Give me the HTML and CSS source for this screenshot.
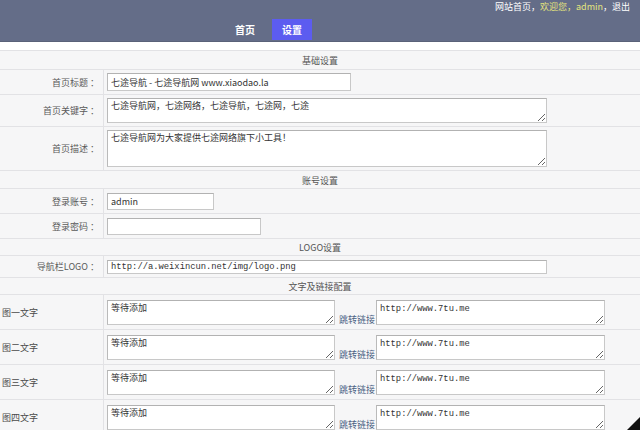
FILE: index.html
```html
<!DOCTYPE html>
<html lang="zh-CN">
<head>
<meta charset="utf-8">
<title>设置</title>
<link rel="stylesheet" href="styles.css">
</head>
<body>
<header class="top">
  <div class="userbar"><span>网站首页</span>，<span class="hl">欢迎您，admin</span>，<span>退出</span></div>
  <nav class="nav"><a class="nav-item">首页</a><a class="nav-item active">设置</a></nav>
</header>

<main class="form">
  <div class="row sec h19">基础设置</div>
  <div class="row h25">
    <div class="label">首页标题<span class="colon">：</span></div>
    <div class="field"><input class="in w244 h18" value="七途导航 - 七途导航网 www.xiaodao.la"></div>
  </div>
  <div class="row h32">
    <div class="label">首页关键字<span class="colon">：</span></div>
    <div class="field"><textarea class="ta w440 h25">七途导航网，七途网络，七途导航，七途网，七途</textarea></div>
  </div>
  <div class="row h44">
    <div class="label">首页描述<span class="colon">：</span></div>
    <div class="field"><textarea class="ta w440 h37">七途导航网为大家提供七途网络旗下小工具！</textarea></div>
  </div>

  <div class="row sec h18">账号设置</div>
  <div class="row h25">
    <div class="label">登录账号<span class="colon">：</span></div>
    <div class="field"><input class="in w107 h17" value="admin"></div>
  </div>
  <div class="row h25">
    <div class="label">登录密码<span class="colon">：</span></div>
    <div class="field"><input class="in w154 h17" type="password" value=""></div>
  </div>

  <div class="row sec h17">LOGO设置</div>
  <div class="row h22">
    <div class="label">导航栏LOGO<span class="colon">：</span></div>
    <div class="field"><input class="in mono w440 h14" value="http://a.weixincun.net/img/logo.png"></div>
  </div>

  <div class="row sec h17">文字及链接配置</div>
  <div class="row h35">
    <div class="label left">图一文字</div>
    <div class="field pair">
      <textarea class="ta w228 h25">等待添加</textarea><span class="jump">跳转链接</span><textarea class="ta mono w229 h25">http://www.7tu.me</textarea>
    </div>
  </div>
  <div class="row h35">
    <div class="label left">图二文字</div>
    <div class="field pair">
      <textarea class="ta w228 h25">等待添加</textarea><span class="jump">跳转链接</span><textarea class="ta mono w229 h25">http://www.7tu.me</textarea>
    </div>
  </div>
  <div class="row h35">
    <div class="label left">图三文字</div>
    <div class="field pair">
      <textarea class="ta w228 h25">等待添加</textarea><span class="jump">跳转链接</span><textarea class="ta mono w229 h25">http://www.7tu.me</textarea>
    </div>
  </div>
  <div class="row h35">
    <div class="label left">图四文字</div>
    <div class="field pair">
      <textarea class="ta w228 h25">等待添加</textarea><span class="jump">跳转链接</span><textarea class="ta mono w229 h25">http://www.7tu.me</textarea>
    </div>
  </div>
</main>
<div class="corner"></div>
</body>
</html>
```

FILE: styles.css
```css
html, body {
  overflow: hidden;
}
body {
  margin: 0;
  background: #ffffff;
  font-family: "Noto Sans CJK SC", "Noto Sans", sans-serif;
  font-size: 9px;
  color: #555;
}

/* header */
.top {
  height: 41px;
  background: #646d88;
  border-bottom: 1px solid #5a6279;
}
.userbar {
  height: 19px;
  text-align: right;
  padding-right: 10px;
  color: #fff;
  line-height: 13px;
}
.hl { color: #e4e57d; }
.nav {
  display: flex;
  gap: 7px;
  margin-left: 225px;
  height: 21px;
}
.nav-item {
  width: 40px;
  text-align: center;
  line-height: 21px;
  color: #fff;
  font-size: 10px;
  font-weight: bold;
}
.nav-item.active { background: #5c5cf0; }

/* form */
.form {
  margin-top: 8px;
  background: #f6f6f7;
}
.row {
  display: flex;
  box-sizing: border-box;
  border-top: 1px solid #e2e2e5;
}
.sec {
  justify-content: center;
  align-items: center;
  color: #555;
  padding-top: 1px;
}
.h17 { height: 17px; }
.h18 { height: 18px; }
.h19 { height: 19px; }
.h22 { height: 22px; }
.h25 { height: 25px; }
.h32 { height: 32px; }
.h35 { height: 35px; }
.h44 { height: 44px; }

.label {
  width: 104px;
  flex: none;
  box-sizing: border-box;
  border-right: 1px solid #e2e2e5;
  display: flex;
  align-items: center;
  justify-content: flex-end;
  padding-right: 4px;
  color: #5a5a5a;
}
.colon {
  display: inline-block;
  width: 11px;
  text-align: right;
}
.label.left {
  justify-content: flex-start;
  padding-left: 2px;
  padding-right: 0;
  color: #4a4a4a;
}
.field {
  flex: 1;
  display: flex;
  align-items: center;
  padding-left: 3px;
}

.in, .ta {
  box-sizing: border-box;
  margin: 0;
  border: 1px solid #c8c8c8;
  border-top-color: #b2b2b2;
  border-left-color: #bababa;
  background: #fff;
  color: #333;
  font-family: "Noto Sans CJK SC", "Noto Sans", sans-serif;
  font-size: 9px;
  outline: none;
}
.in {
  padding: 0 3px;
  line-height: 12px;
}
.ta {
  display: block;
  padding: 1px 3px;
  line-height: 11px;
}
.mono {
  font-family: "Liberation Mono", monospace;
  font-size: 8.8px;
}
.ta.mono { padding-top: 3px; }

.w107 { width: 107px; }
.w154 { width: 154px; }
.w228 { width: 228px; }
.w229 { width: 229px; }
.w244 { width: 244px; }
.w440 { width: 440px; }
.in.h14 { height: 14px; }
.in.h17 { height: 17px; }
.in.h18 { height: 18px; }
.ta.h25 { height: 25px; }
.ta.h37 { height: 37px; }

.pair {
  align-items: flex-end;
  padding-bottom: 4px;
}
.jump {
  color: #4a6283;
  line-height: 10px;
  margin: 0 1px 0 4px;
  white-space: nowrap;
}

.corner {
  position: fixed;
  right: 0;
  bottom: 0;
  width: 0;
  height: 0;
  border-left: 13px solid transparent;
  border-bottom: 13px solid #111;
}
```
